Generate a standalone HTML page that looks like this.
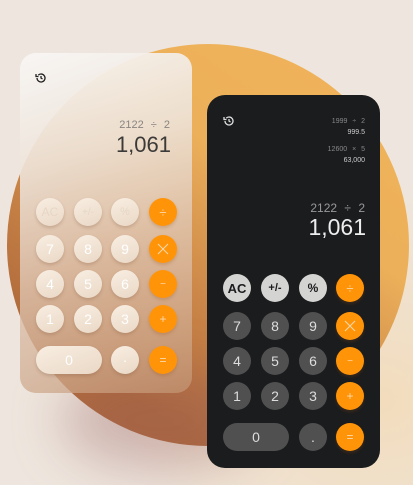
<!DOCTYPE html>
<html><head><meta charset="utf-8"><style>
*{margin:0;padding:0;box-sizing:border-box}
body{width:413px;height:485px;overflow:hidden;position:relative;font-family:"Liberation Sans",sans-serif;
background:radial-gradient(ellipse 260px 220px at 380px 400px,#f2dcbc 0%,rgba(242,220,188,0) 100%),#eee6de;}
.circle{position:absolute;left:7px;top:44px;width:402px;height:402px;border-radius:50%;
background:linear-gradient(215deg,#f1b45a 0%,#ecb05a 35%,#c98447 60%,#b06b3c 80%,#b06b3c 100%)}
.shadow{position:absolute;left:60px;top:370px;width:200px;height:100px;border-radius:50%;background:rgba(150,90,90,.35);filter:blur(25px)}
.light{position:absolute;left:20px;top:53px;width:172px;height:340px;border-radius:16px;
background:linear-gradient(160deg,rgba(248,246,244,.97) 0%,rgba(238,228,218,.9) 30%,rgba(222,196,176,.8) 60%,rgba(196,150,116,.7) 100%);}
.dark{position:absolute;left:207px;top:95px;width:173px;height:373px;border-radius:18px;background:#1b1c1e}
.b{position:absolute;width:28px;height:28px;border-radius:14px;display:flex;align-items:center;justify-content:center;font-size:14px}
.lb{background:linear-gradient(160deg,#f8eee2,#ead8c6);color:#fff;box-shadow:0 2px 3px rgba(120,80,50,.25)}
.lf{color:#e6d6c6;font-size:12px}
.o{background:#ff9408;color:#fcd9ae;font-size:12px;box-shadow:0 2px 3px rgba(150,80,20,.25)}
.dg{background:#505050;color:#ddd}
.dl{background:#d4d4d2;color:#1b1c1e;font-size:13px;font-weight:bold}
.t{position:absolute;text-align:right}
</style></head><body>
<div class="circle"></div>
<div class="shadow"></div>
<div class="light"></div>
<svg style="position:absolute;left:35px;top:72px" width="12" height="12" viewBox="0 0 24 24" fill="none" stroke="#222" stroke-width="2.6"><path d="M4 12a8 8 0 1 0 2.5-5.8"/><path d="M2 4v5h5"/><path d="M12 8v4l3 2"/></svg>
<div class="t" style="left:100px;top:119px;width:70px;font-size:11px;color:#8a8480;word-spacing:4px">2122 ÷ 2</div>
<div class="t" style="left:90px;top:132px;width:81px;font-size:22px;color:#3c3a38">1,061</div>

<div class="b lb lf" style="left:36px;top:198px">AC</div>
<div class="b lb lf" style="left:74px;top:198px;font-size:10px">+/-</div>
<div class="b lb lf" style="left:111px;top:198px;font-size:11px">%</div>
<div class="b o" style="left:149px;top:198px;font-size:13px">÷</div>
<div class="b lb" style="left:36px;top:235px">7</div>
<div class="b lb" style="left:74px;top:235px">8</div>
<div class="b lb" style="left:111px;top:235px">9</div>
<div class="b o" style="left:149px;top:235px"><svg width="12" height="12" viewBox="0 0 12 12" stroke="#fcd9ae" stroke-width="1"><path d="M1 1L11 11M11 1L1 11"/></svg></div>
<div class="b o" style="left:149px;top:270px;font-size:10px">−</div>
<div class="b lb" style="left:36px;top:270px">4</div>
<div class="b lb" style="left:74px;top:270px">5</div>
<div class="b lb" style="left:111px;top:270px">6</div>
<div class="b lb" style="left:36px;top:305px">1</div>
<div class="b lb" style="left:74px;top:305px">2</div>
<div class="b lb" style="left:111px;top:305px">3</div>
<div class="b o" style="left:149px;top:305px">+</div>
<div class="b lb" style="left:36px;top:346px;width:66px">0</div>
<div class="b lb" style="left:111px;top:346px">·</div>
<div class="b o" style="left:149px;top:346px">=</div>

<div class="dark"></div>
<svg style="position:absolute;left:223px;top:115px" width="12" height="12" viewBox="0 0 24 24" fill="none" stroke="#ddd" stroke-width="2.6"><path d="M4 12a8 8 0 1 0 2.5-5.8"/><path d="M2 4v5h5"/><path d="M12 8v4l3 2"/></svg>
<div class="t" style="left:300px;top:118px;width:65px;font-size:7px;color:#888;word-spacing:3px">1999 ÷ 2</div>
<div class="t" style="left:300px;top:129px;width:65px;font-size:7px;color:#ccc">999.5</div>
<div class="t" style="left:300px;top:146px;width:65px;font-size:7px;color:#888;word-spacing:3px">12600 × 5</div>
<div class="t" style="left:300px;top:157px;width:65px;font-size:7px;color:#ccc">63,000</div>
<div class="t" style="left:290px;top:201px;width:75px;font-size:12px;color:#999;word-spacing:4px">2122 ÷ 2</div>
<div class="t" style="left:280px;top:214px;width:86px;font-size:23px;color:#eee">1,061</div>

<div class="b dl" style="left:223px;top:274px">AC</div>
<div class="b dl" style="left:261px;top:274px;font-size:11px">+/-</div>
<div class="b dl" style="left:299px;top:274px;font-size:12px">%</div>
<div class="b o" style="left:336px;top:274px;font-size:13px">÷</div>
<div class="b dg" style="left:223px;top:312px">7</div>
<div class="b dg" style="left:261px;top:312px">8</div>
<div class="b dg" style="left:299px;top:312px">9</div>
<div class="b o" style="left:336px;top:312px"><svg width="12" height="12" viewBox="0 0 12 12" stroke="#fcd9ae" stroke-width="1"><path d="M1 1L11 11M11 1L1 11"/></svg></div>
<div class="b dg" style="left:223px;top:347px">4</div>
<div class="b dg" style="left:261px;top:347px">5</div>
<div class="b dg" style="left:299px;top:347px">6</div>
<div class="b o" style="left:336px;top:347px;font-size:10px">−</div>
<div class="b dg" style="left:223px;top:382px">1</div>
<div class="b dg" style="left:261px;top:382px">2</div>
<div class="b dg" style="left:299px;top:382px">3</div>
<div class="b o" style="left:336px;top:382px">+</div>
<div class="b dg" style="left:223px;top:423px;width:66px">0</div>
<div class="b dg" style="left:299px;top:423px">.</div>
<div class="b o" style="left:336px;top:423px">=</div>
</body></html>
